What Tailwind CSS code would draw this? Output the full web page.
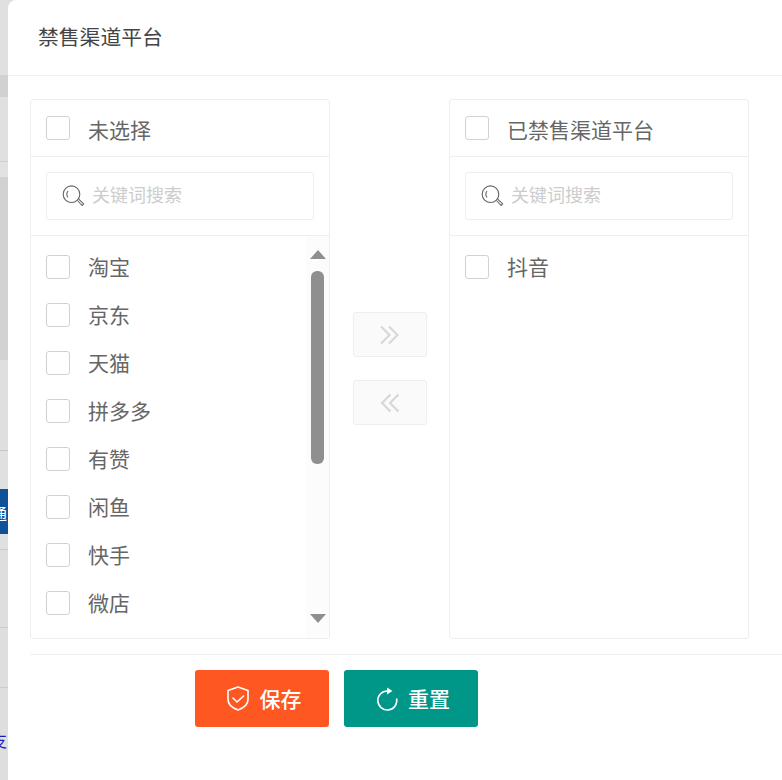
<!DOCTYPE html>
<html lang="zh">
<head>
<meta charset="utf-8">
<script src="https://cdn.jsdelivr.net/npm/@tailwindcss/browser@4"></script>
<title>禁售渠道平台</title>
</head>
<body class="m-0 overflow-hidden bg-[#dedede] font-['Noto_Sans_CJK_SC','Noto_Sans',sans-serif]">
<div class="flex h-[780px] w-[782px] overflow-hidden">
  <!-- dimmed page behind the dialog -->
  <div class="flex w-[8px] shrink-0 flex-col overflow-hidden bg-[#dfdfdf]">
    <div class="h-[75px] shrink-0 bg-[#e0e0e0]"></div>
    <div class="h-[22px] shrink-0 bg-[#d1d1d1]"></div>
    <div class="h-[64px] shrink-0 bg-[#e0e0e0]"></div>
    <div class="h-[16px] shrink-0 border-t border-[#cfcfcf] bg-[#e2e2e2]"></div>
    <div class="h-[183px] shrink-0 bg-[#d2d2d2]"></div>
    <div class="h-[90px] shrink-0 bg-[#dfdfdf]"></div>
    <div class="h-[39px] shrink-0 border-t border-[#c8c8c8] bg-[#e0e0e0]"></div>
    <div class="flex h-[45px] shrink-0 items-center overflow-hidden whitespace-nowrap bg-[#0f5299] text-[16px] text-white"><span class="-ml-[9px] pt-[3px]">通</span></div>
    <div class="h-[15px] shrink-0 bg-[#e0e0e0]"></div>
    <div class="h-[78px] shrink-0 border-t border-[#cbcbcb] bg-[#dedede]"></div>
    <div class="h-[60px] shrink-0 border-t border-[#cbcbcb] bg-[#dedede]"></div>
    <div class="flex h-[93px] shrink-0 items-start overflow-hidden whitespace-nowrap border-t border-[#cbcbcb] bg-[#dedede] pt-[40px] text-[16px] leading-[24px] text-[#1a1ab8]"><span class="-ml-[9px]">支</span></div>
  </div>

  <!-- dialog -->
  <div class="flex min-w-0 flex-1 flex-col rounded-tl-[8px] bg-white">
    <div class="flex h-[76px] shrink-0 items-center border-b border-[#f0f0f0] pl-[30px] pb-[1px] text-[20.8px] text-[#444]">禁售渠道平台</div>

    <div class="flex h-[578px] shrink-0 items-start pl-[22px] pt-[23px]">
      <!-- left panel -->
      <div class="flex h-[540px] w-[300px] shrink-0 flex-col rounded-[3px] border border-[#eeeeee]">
        <div class="flex h-[57px] shrink-0 items-center gap-[18px] border-b border-[#eeeeee] pl-[15px] text-[21px] text-[#666]">
          <span class="h-[24px] w-[24px] shrink-0 rounded-[3px] border border-[#d2d2d2] bg-white"></span>
          <span class="pt-[3px]">未选择</span>
        </div>
        <div class="flex h-[79px] shrink-0 items-start border-b border-[#eeeeee] px-[15px] pt-[15px]">
          <div class="flex h-[48px] w-[268px] items-center gap-[7px] rounded-[3px] border border-[#eeeeee] pl-[15px] pb-[3px] text-[18px] text-[#cccccc]">
            <svg class="mt-[3px] shrink-0" width="23" height="23" viewBox="0 0 23 23" fill="none" stroke="#666" stroke-width="1.1"><circle cx="9.5" cy="9.2" r="8.3"/><path d="M6 6a5.500 5.500 0 0 0 0 6.500"/><path d="M15.500 15.500l4.500 5 1.700-1.600-5-4.700" stroke-linejoin="round"/></svg>
            <span>关键词搜索</span>
          </div>
        </div>
        <div class="flex min-h-0 flex-1">
          <ul class="flex min-w-0 flex-1 flex-col pl-[15px] pt-[7px] text-[21px] text-[#666]">
            <li class="flex h-[48px] items-center gap-[18px]"><span class="h-[24px] w-[24px] rounded-[3px] border border-[#d2d2d2] bg-white"></span><span>淘宝</span></li>
            <li class="flex h-[48px] items-center gap-[18px]"><span class="h-[24px] w-[24px] rounded-[3px] border border-[#d2d2d2] bg-white"></span><span>京东</span></li>
            <li class="flex h-[48px] items-center gap-[18px]"><span class="h-[24px] w-[24px] rounded-[3px] border border-[#d2d2d2] bg-white"></span><span>天猫</span></li>
            <li class="flex h-[48px] items-center gap-[18px]"><span class="h-[24px] w-[24px] rounded-[3px] border border-[#d2d2d2] bg-white"></span><span>拼多多</span></li>
            <li class="flex h-[48px] items-center gap-[18px]"><span class="h-[24px] w-[24px] rounded-[3px] border border-[#d2d2d2] bg-white"></span><span>有赞</span></li>
            <li class="flex h-[48px] items-center gap-[18px]"><span class="h-[24px] w-[24px] rounded-[3px] border border-[#d2d2d2] bg-white"></span><span>闲鱼</span></li>
            <li class="flex h-[48px] items-center gap-[18px]"><span class="h-[24px] w-[24px] rounded-[3px] border border-[#d2d2d2] bg-white"></span><span>快手</span></li>
            <li class="flex h-[48px] items-center gap-[18px]"><span class="h-[24px] w-[24px] rounded-[3px] border border-[#d2d2d2] bg-white"></span><span>微店</span></li>
          </ul>
          <div class="flex w-[23px] shrink-0 flex-col items-center bg-[#fcfcfc] pt-[14px]">
            <svg class="ml-[1px] shrink-0" width="16" height="9" viewBox="0 0 16 9"><path d="M8 0l8 9H0z" fill="#8f8f8f"/></svg>
            <div class="mt-[12px] h-[193px] w-[13px] shrink-0 rounded-[6px] bg-[#8f8f8f]"></div>
            <svg class="mt-[150px] ml-[1px] shrink-0" width="16" height="9" viewBox="0 0 16 9"><path d="M8 9L16 0H0z" fill="#8f8f8f"/></svg>
          </div>
        </div>
      </div>

      <!-- transfer buttons -->
      <div class="ml-[23px] flex w-[74px] shrink-0 flex-col gap-[23px] pt-[213px]">
        <div class="flex h-[45px] items-center justify-center rounded-[3px] border border-[#eeeeee] bg-[#fafafa]">
          <svg width="20" height="20" viewBox="0 0 20 20" fill="none" stroke="#d6d6d6" stroke-width="2"><path d="M1 1.500l8.500 8.500L1 18.500M9 1.500l8.500 8.500L9 18.500"/></svg>
        </div>
        <div class="flex h-[45px] items-center justify-center rounded-[3px] border border-[#eeeeee] bg-[#fafafa]">
          <svg width="20" height="20" viewBox="0 0 20 20" fill="none" stroke="#d6d6d6" stroke-width="2"><path d="M10.500 1.500L2 10l8.500 8.500M18.500 1.500L10 10l8.500 8.500"/></svg>
        </div>
      </div>

      <!-- right panel -->
      <div class="ml-[22px] flex h-[540px] w-[300px] shrink-0 flex-col rounded-[3px] border border-[#eeeeee]">
        <div class="flex h-[57px] shrink-0 items-center gap-[18px] border-b border-[#eeeeee] pl-[15px] text-[21px] text-[#666]">
          <span class="h-[24px] w-[24px] shrink-0 rounded-[3px] border border-[#d2d2d2] bg-white"></span>
          <span class="pt-[3px]">已禁售渠道平台</span>
        </div>
        <div class="flex h-[79px] shrink-0 items-start border-b border-[#eeeeee] px-[15px] pt-[15px]">
          <div class="flex h-[48px] w-[268px] items-center gap-[7px] rounded-[3px] border border-[#eeeeee] pl-[15px] pb-[3px] text-[18px] text-[#cccccc]">
            <svg class="mt-[3px] shrink-0" width="23" height="23" viewBox="0 0 23 23" fill="none" stroke="#666" stroke-width="1.1"><circle cx="9.5" cy="9.2" r="8.3"/><path d="M6 6a5.500 5.500 0 0 0 0 6.500"/><path d="M15.500 15.500l4.500 5 1.700-1.600-5-4.700" stroke-linejoin="round"/></svg>
            <span>关键词搜索</span>
          </div>
        </div>
        <ul class="pl-[15px] pt-[7px] text-[21px] text-[#666]">
          <li class="flex h-[48px] items-center gap-[18px]"><span class="h-[24px] w-[24px] rounded-[3px] border border-[#d2d2d2] bg-white"></span><span>抖音</span></li>
        </ul>
      </div>
    </div>

    <!-- footer -->
    <div class="ml-[22px] flex gap-[15px] border-t border-[#eeeeee] pl-[165px] pt-[15px]">
      <div class="flex h-[57px] w-[134px] items-center justify-center gap-[11px] rounded-[3px] bg-[#ff5722] pl-[4px] text-[21px] font-medium text-white">
        <svg width="22" height="25" viewBox="0 0 22 25" fill="none" stroke="#fff" stroke-width="1.6" stroke-linejoin="round" stroke-linecap="round"><path d="M11 1l10 3.600v9c0 5-4.500 8.500-10 10.400C5.500 22.100 1 18.600 1 13.600v-9z"/><path d="M6 12l4 4 6.500-6"/></svg>
        <span>保存</span>
      </div>
      <div class="flex h-[57px] w-[134px] items-center justify-center gap-[8px] rounded-[3px] bg-[#009688] pl-[4px] text-[21px] font-medium text-white">
        <svg width="24" height="26" viewBox="0 0 24 26" fill="none" stroke="#fff" stroke-width="1.6"><path d="M11.300 5A9.500 9.500 0 1 0 20.600 12.500"/><path d="M11 1.500L16.500 5 11 8.500z" fill="#fff" stroke="none"/></svg>
        <span>重置</span>
      </div>
    </div>
  </div>
</div>
</body>
</html>
